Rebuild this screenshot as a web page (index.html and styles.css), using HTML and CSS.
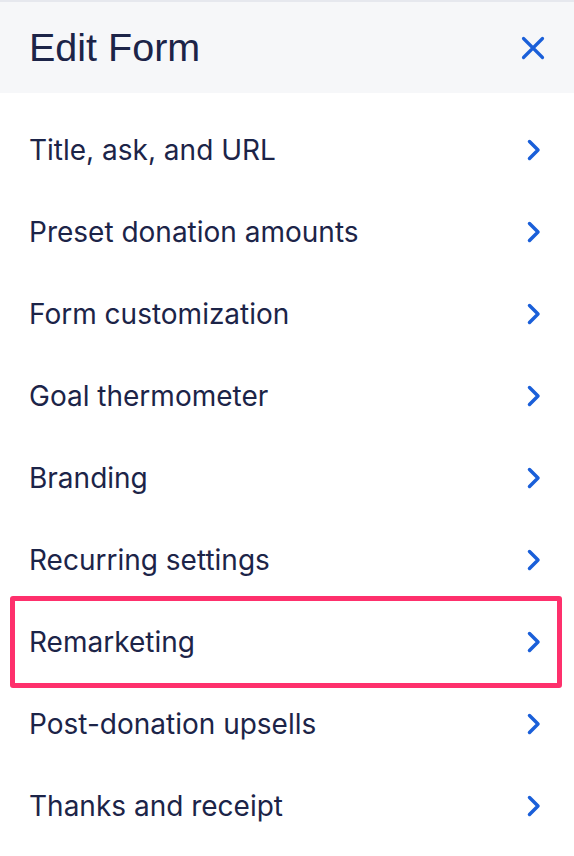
FILE: index.html
```html
<!DOCTYPE html>
<html>
<head>
<meta charset="utf-8">
<link rel="stylesheet" href="styles.css">
</head>
<body>
<div class="panel">
  <header class="head">
    <h1 class="title">Edit Form</h1>
    <svg class="close" width="24" height="24" viewBox="0 0 24 24"><path d="M2.5 2.5 L21.5 21.5 M21.5 2.5 L2.5 21.5" stroke="#1a5fd9" stroke-width="3.2" stroke-linecap="round" fill="none"/></svg>
  </header>
  <ul class="list">
    <li class="row"><span>Title, ask, and URL</span><svg class="chev" width="14" height="22" viewBox="0 0 14 22"><path d="M2.5 2.5 L11 11 L2.5 19.5" stroke="#1a5fd9" stroke-width="3.5" stroke-linecap="round" stroke-linejoin="round" fill="none"/></svg></li>
    <li class="row"><span>Preset donation amounts</span><svg class="chev" width="14" height="22" viewBox="0 0 14 22"><path d="M2.5 2.5 L11 11 L2.5 19.5" stroke="#1a5fd9" stroke-width="3.5" stroke-linecap="round" stroke-linejoin="round" fill="none"/></svg></li>
    <li class="row"><span>Form customization</span><svg class="chev" width="14" height="22" viewBox="0 0 14 22"><path d="M2.5 2.5 L11 11 L2.5 19.5" stroke="#1a5fd9" stroke-width="3.5" stroke-linecap="round" stroke-linejoin="round" fill="none"/></svg></li>
    <li class="row"><span>Goal thermometer</span><svg class="chev" width="14" height="22" viewBox="0 0 14 22"><path d="M2.5 2.5 L11 11 L2.5 19.5" stroke="#1a5fd9" stroke-width="3.5" stroke-linecap="round" stroke-linejoin="round" fill="none"/></svg></li>
    <li class="row"><span>Branding</span><svg class="chev" width="14" height="22" viewBox="0 0 14 22"><path d="M2.5 2.5 L11 11 L2.5 19.5" stroke="#1a5fd9" stroke-width="3.5" stroke-linecap="round" stroke-linejoin="round" fill="none"/></svg></li>
    <li class="row"><span>Recurring settings</span><svg class="chev" width="14" height="22" viewBox="0 0 14 22"><path d="M2.5 2.5 L11 11 L2.5 19.5" stroke="#1a5fd9" stroke-width="3.5" stroke-linecap="round" stroke-linejoin="round" fill="none"/></svg></li>
    <li class="row highlighted"><span>Remarketing</span><svg class="chev" width="14" height="22" viewBox="0 0 14 22"><path d="M2.5 2.5 L11 11 L2.5 19.5" stroke="#1a5fd9" stroke-width="3.5" stroke-linecap="round" stroke-linejoin="round" fill="none"/></svg></li>
    <li class="row"><span>Post-donation upsells</span><svg class="chev" width="14" height="22" viewBox="0 0 14 22"><path d="M2.5 2.5 L11 11 L2.5 19.5" stroke="#1a5fd9" stroke-width="3.5" stroke-linecap="round" stroke-linejoin="round" fill="none"/></svg></li>
    <li class="row"><span>Thanks and receipt</span><svg class="chev" width="14" height="22" viewBox="0 0 14 22"><path d="M2.5 2.5 L11 11 L2.5 19.5" stroke="#1a5fd9" stroke-width="3.5" stroke-linecap="round" stroke-linejoin="round" fill="none"/></svg></li>
  </ul>
</div>
</body>
</html>
```

FILE: styles.css
```css
html, body {
  margin: 0;
  padding: 0;
  background: #ffffff;
}
.panel {
  width: 574px;
  border-top: 2px solid #e6e8ee;
}
.head {
  height: 91px;
  background: #f6f7f9;
  display: flex;
  align-items: center;
  justify-content: space-between;
  padding: 0 29px 0 29px;
  box-sizing: border-box;
}
.title {
  margin: 0;
  font-family: "Liberation Sans", Arial, sans-serif;
  font-weight: 400;
  font-size: 39.5px;
  color: #1c2448;
  line-height: 1;
}
.close {
  display: block;
}
.list {
  list-style: none;
  margin: 0;
  padding: 16px 0 0 0;
}
.row {
  height: 82px;
  display: flex;
  align-items: center;
  justify-content: space-between;
  padding: 0 33px 0 29px;
  box-sizing: border-box;
  font-family: Inter, "Noto Sans", sans-serif;
  font-size: 28px;
  color: #1c2448;
  position: relative;
}
.chev {
  display: block;
}
.highlighted::after {
  content: "";
  position: absolute;
  left: 10px;
  right: 12px;
  top: -5px;
  bottom: -5px;
  border: 5px solid #fe306c;
  border-radius: 3px;
}
```
